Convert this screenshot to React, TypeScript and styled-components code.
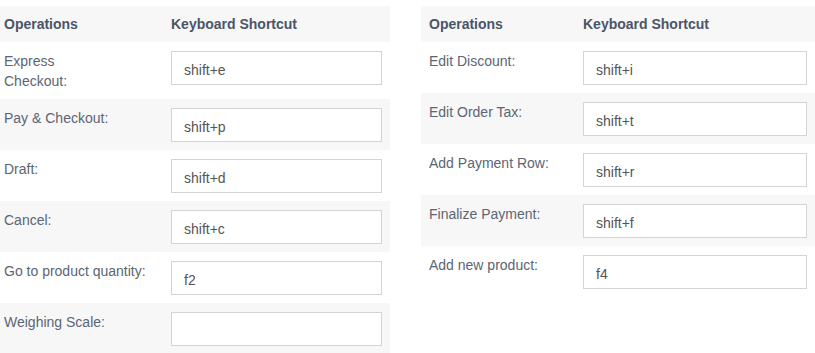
import styled, { createGlobalStyle } from 'styled-components';

const GlobalStyle = createGlobalStyle`
  body {
    margin: 0;
    background: #ffffff;
    font-family: "Liberation Sans", Arial, sans-serif;
    font-size: 14px;
    overflow: hidden;
  }
`;

const Page = styled.div`
  display: flex;
  align-items: flex-start;
  gap: 31px;
  margin: 6px 0 0 -4px;
`;

const Table = styled.table`
  width: 394px;
  flex: none;
  border-collapse: collapse;
  table-layout: fixed;
`;

const HeadCell = styled.th`
  text-align: left;
  padding: 8px;
  line-height: 20px;
  font-weight: 700;
  font-size: 14px;
  color: #4b5568;
  background: #f7f7f7;
`;

const Row = styled.tr<{ $striped: boolean }>`
  border-top: 1px solid ${({ $striped }) => ($striped ? '#f7f7f7' : '#ffffff')};
  background: ${({ $striped }) => ($striped ? '#f7f7f7' : '#ffffff')};
`;

const Label = styled.td`
  padding: 8px;
  vertical-align: top;
  line-height: 20px;
  color: #5c6573;
`;

const InputCell = styled.td`
  padding: 8px;
  vertical-align: top;
`;

const Input = styled.input`
  box-sizing: border-box;
  display: block;
  width: 100%;
  height: 34px;
  padding: 8px 12px 4px;
  border: 1px solid #d4d4d4;
  border-radius: 0;
  background: #ffffff;
  font-family: "Liberation Sans", Arial, sans-serif;
  font-size: 14px;
  color: #555555;
  outline: none;
`;

type Shortcut = { label: string[]; keys: string };

const leftShortcuts: Shortcut[] = [
  { label: ['Express', 'Checkout:'], keys: 'shift+e' },
  { label: ['Pay & Checkout:'], keys: 'shift+p' },
  { label: ['Draft:'], keys: 'shift+d' },
  { label: ['Cancel:'], keys: 'shift+c' },
  { label: ['Go to product quantity:'], keys: 'f2' },
  { label: ['Weighing Scale:'], keys: '' },
];

const rightShortcuts: Shortcut[] = [
  { label: ['Edit Discount:'], keys: 'shift+i' },
  { label: ['Edit Order Tax:'], keys: 'shift+t' },
  { label: ['Add Payment Row:'], keys: 'shift+r' },
  { label: ['Finalize Payment:'], keys: 'shift+f' },
  { label: ['Add new product:'], keys: 'f4' },
];

function ShortcutTable({ rows, labelWidth }: { rows: Shortcut[]; labelWidth: number }) {
  return (
    <Table>
      <colgroup>
        <col style={{ width: labelWidth }} />
        <col />
      </colgroup>
      <thead>
        <tr>
          <HeadCell>Operations</HeadCell>
          <HeadCell>Keyboard Shortcut</HeadCell>
        </tr>
      </thead>
      <tbody>
        {rows.map((row, i) => (
          <Row key={row.label.join(' ')} $striped={i % 2 === 1}>
            <Label>
              {row.label.map((line, j) => (
                <span key={line}>
                  {j > 0 && <br />}
                  {line}
                </span>
              ))}
            </Label>
            <InputCell>
              <Input type="text" defaultValue={row.keys} />
            </InputCell>
          </Row>
        ))}
      </tbody>
    </Table>
  );
}

export default function App() {
  return (
    <>
      <GlobalStyle />
      <Page>
        <ShortcutTable rows={leftShortcuts} labelWidth={167} />
        <ShortcutTable rows={rightShortcuts} labelWidth={154} />
      </Page>
    </>
  );
}
